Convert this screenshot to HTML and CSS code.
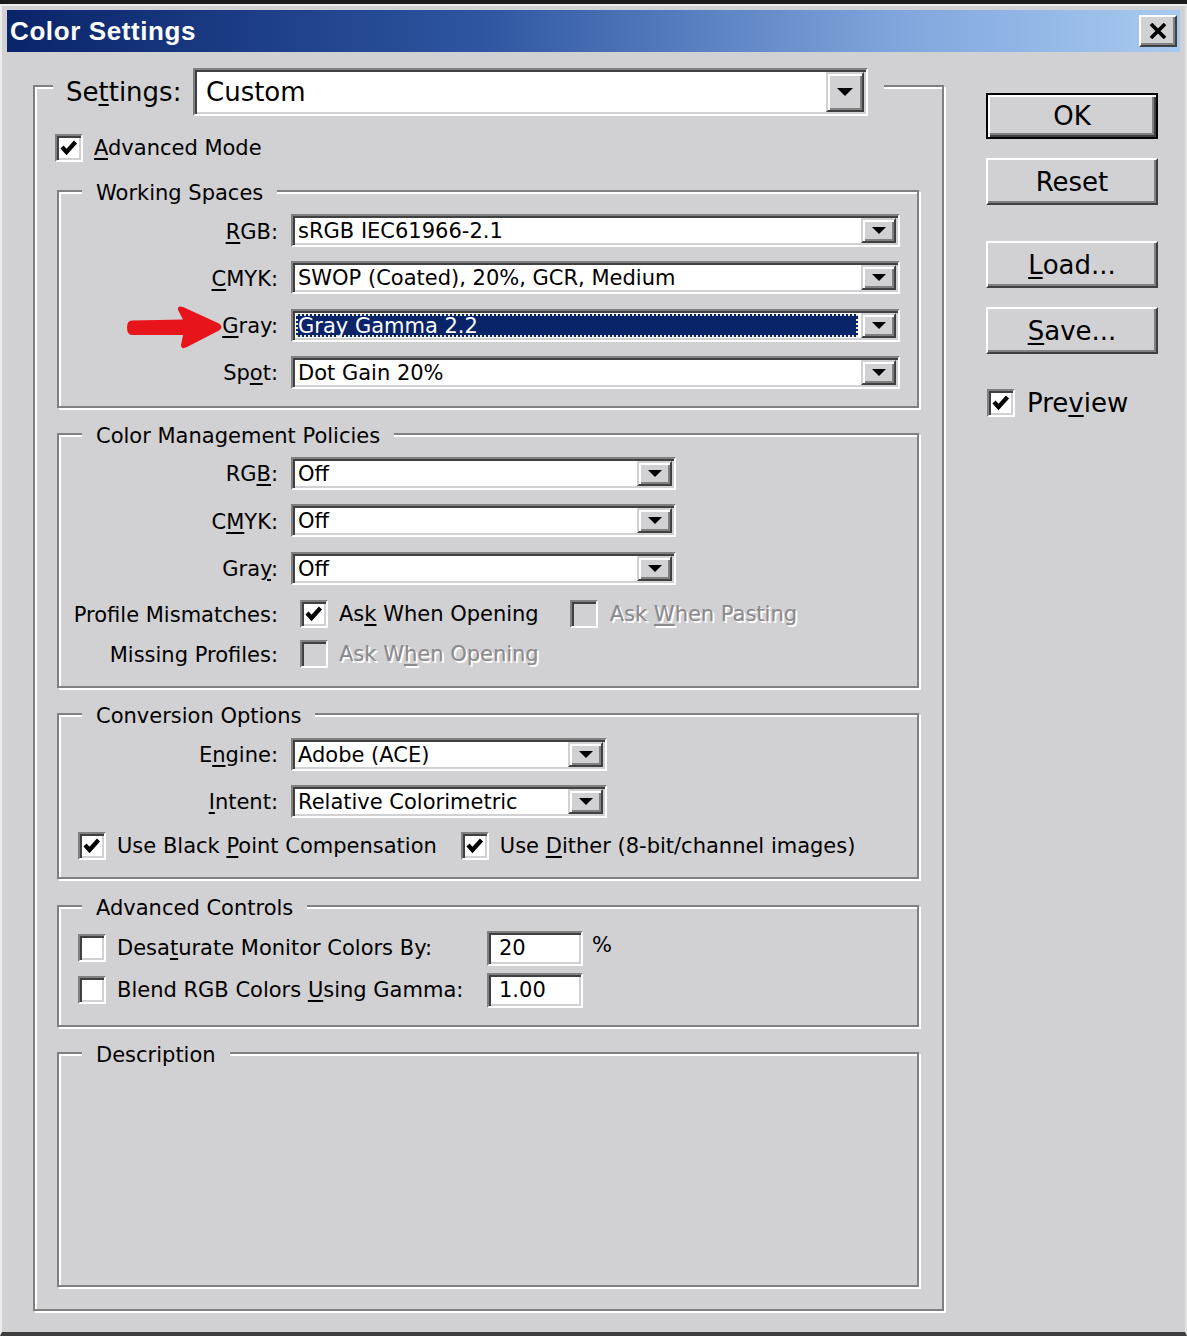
FILE: index.html
```html
<!DOCTYPE html>
<html lang="en">
<head>
<meta charset="utf-8">
<title>Color Settings</title>
<link rel="stylesheet" href="styles.css">
</head>
<body>
<div class="screen">
  <div class="window">
    <div class="titlebar">
      <span class="title-text">Color Settings</span>
      <button class="close-btn" aria-label="Close">
        <svg viewBox="0 0 18 16" width="18" height="16"><path d="M2 1 L16 15 M16 1 L2 15" stroke="#000" stroke-width="3.6" fill="none"/></svg>
      </button>
    </div>

    <div class="dialog-body">
      <div class="main-group">
        <div class="settings-head">
          <span class="settings-label">Se<u>t</u>tings:</span>
          <div class="combo combo-lg">
            <span class="combo-text">Custom</span>
            <span class="combo-btn"><i class="tri tri-lg"></i></span>
          </div>
        </div>

        <div class="check-line adv-mode">
          <span class="cb"><svg viewBox="0 0 20 20" width="20" height="20"><path d="M3 9 L7.5 14 L16.5 4" fill="none" stroke="#000" stroke-width="4.2"/></svg></span>
          <span class="cb-text"><u>A</u>dvanced Mode</span>
        </div>

        <section class="group ws">
          <div class="group-title">Working Spaces</div>
          <svg class="arrow" viewBox="0 0 98 46" width="98" height="46"><path d="M6 16.5 L57 15.5 L52 6 Q51 1 57 3 L93 19.5 Q98 23 93 26.5 L61 43 Q55 46 55 41 L57 31 L6 31 Q1 31 1 23.5 Q1 16.5 6 16.5 Z" fill="#e8141b"/></svg>
          <div class="rows ws-rows">
            <div class="form-row"><span class="lbl"><u>R</u>GB:</span>
              <div class="combo combo-ws"><span class="combo-text">sRGB IEC61966-2.1</span><span class="combo-btn"><i class="tri"></i></span></div></div>
            <div class="form-row"><span class="lbl"><u>C</u>MYK:</span>
              <div class="combo combo-ws"><span class="combo-text">SWOP (Coated), 20%, GCR, Medium</span><span class="combo-btn"><i class="tri"></i></span></div></div>
            <div class="form-row"><span class="lbl"><u>G</u>ray:</span>
              <div class="combo combo-ws"><span class="combo-text sel">Gray Gamma 2.2</span><span class="combo-btn"><i class="tri"></i></span></div></div>
            <div class="form-row"><span class="lbl">Sp<u>o</u>t:</span>
              <div class="combo combo-ws"><span class="combo-text">Dot Gain 20%</span><span class="combo-btn"><i class="tri"></i></span></div></div>
          </div>
        </section>

        <section class="group cmp">
          <div class="group-title">Color Management Policies</div>
          <div class="rows cmp-rows">
            <div class="form-row"><span class="lbl">RG<u>B</u>:</span>
              <div class="combo combo-cmp"><span class="combo-text">Off</span><span class="combo-btn"><i class="tri"></i></span></div></div>
            <div class="form-row"><span class="lbl">C<u>M</u>YK:</span>
              <div class="combo combo-cmp"><span class="combo-text">Off</span><span class="combo-btn"><i class="tri"></i></span></div></div>
            <div class="form-row"><span class="lbl">Gra<u>y</u>:</span>
              <div class="combo combo-cmp"><span class="combo-text">Off</span><span class="combo-btn"><i class="tri"></i></span></div></div>
          </div>
          <div class="check-row pm-row">
            <span class="lbl">Profile Mismatches:</span>
            <span class="cb cb-first"><svg viewBox="0 0 20 20" width="20" height="20"><path d="M3 9 L7.5 14 L16.5 4" fill="none" stroke="#000" stroke-width="4.2"/></svg></span>
            <span class="cb-text">As<u>k</u> When Opening</span>
            <span class="cb disabled cb-second"></span>
            <span class="cb-text disabled-text">Ask <u>W</u>hen Pasting</span>
          </div>
          <div class="check-row mp-row">
            <span class="lbl">Missing Profiles:</span>
            <span class="cb disabled cb-first"></span>
            <span class="cb-text disabled-text">Ask W<u>h</u>en Opening</span>
          </div>
        </section>

        <section class="group conv">
          <div class="group-title">Conversion Options</div>
          <div class="rows conv-rows">
            <div class="form-row"><span class="lbl">E<u>n</u>gine:</span>
              <div class="combo combo-conv"><span class="combo-text">Adobe (ACE)</span><span class="combo-btn"><i class="tri"></i></span></div></div>
            <div class="form-row"><span class="lbl"><u>I</u>ntent:</span>
              <div class="combo combo-conv"><span class="combo-text">Relative Colorimetric</span><span class="combo-btn"><i class="tri"></i></span></div></div>
          </div>
          <div class="check-line conv-checks">
            <span class="cb"><svg viewBox="0 0 20 20" width="20" height="20"><path d="M3 9 L7.5 14 L16.5 4" fill="none" stroke="#000" stroke-width="4.2"/></svg></span>
            <span class="cb-text">Use Black <u>P</u>oint Compensation</span>
            <span class="cb cb-dither"><svg viewBox="0 0 20 20" width="20" height="20"><path d="M3 9 L7.5 14 L16.5 4" fill="none" stroke="#000" stroke-width="4.2"/></svg></span>
            <span class="cb-text">Use <u>D</u>ither (8-bit/channel images)</span>
          </div>
        </section>

        <section class="group adv">
          <div class="group-title">Advanced Controls</div>
          <div class="adv-row adv-row1">
            <span class="cb"></span>
            <span class="cb-text adv-label">Desa<u>t</u>urate Monitor Colors By:</span>
            <span class="field">20</span>
            <span class="unit">%</span>
          </div>
          <div class="adv-row adv-row2">
            <span class="cb"></span>
            <span class="cb-text adv-label">Blend RGB Colors <u>U</u>sing Gamma:</span>
            <span class="field">1.00</span>
          </div>
        </section>

        <section class="group desc">
          <div class="group-title">Description</div>
        </section>
      </div>

      <div class="side">
        <button class="btn btn-default">OK</button>
        <button class="btn btn-reset">Reset</button>
        <button class="btn btn-load"><u>L</u>oad...</button>
        <button class="btn btn-save"><u>S</u>ave...</button>
        <div class="preview">
          <span class="cb"><svg viewBox="0 0 20 20" width="20" height="20"><path d="M3 9 L7.5 14 L16.5 4" fill="none" stroke="#000" stroke-width="4.2"/></svg></span>
          <span class="preview-text">Pre<u>v</u>iew</span>
        </div>
      </div>
    </div>
  </div>
</div>
</body>
</html>
```

FILE: styles.css
```css
* { box-sizing: border-box; }
html, body { margin: 0; padding: 0; }
body {
  background: #1b1b1b;
  font-family: "DejaVu Sans", "Noto Sans", sans-serif;
  font-size: 21px;
  color: #000;
}
u {
  text-decoration-thickness: 2px;
  text-underline-offset: 3px;
}

.screen {
  width: 1187px;
  height: 1336px;
  padding-top: 4px;
  overflow: hidden;
}
.window {
  height: 1332px;
  background: #d1d0d2;
  border-top: 2px solid #ececec;
  border-left: 2px solid #ececec;
  border-right: 2px solid #e2e2e2;
  border-bottom: 4px solid #3c3c3c;
  padding: 4px 5px 0 5px;
}

/* title bar */
.titlebar {
  height: 42px;
  background: linear-gradient(to right, #0a246a 0%, #2d55a0 40%, #7ea4dc 75%, #a8caf0 100%);
  display: flex;
  align-items: center;
  justify-content: space-between;
  padding: 0 3px;
}
.title-text {
  font-family: "Liberation Sans", Arial, sans-serif;
  font-weight: bold;
  font-size: 26px;
  letter-spacing: 0.6px;
  color: #fff;
}
.close-btn {
  width: 38px;
  height: 32px;
  padding: 0;
  background: #d1d0d2;
  border: 2px solid;
  border-color: #fff #404040 #404040 #fff;
  box-shadow: inset -2px -2px 0 #808080;
  display: flex;
  align-items: center;
  justify-content: center;
}

/* body */
.dialog-body {
  display: flex;
  margin-top: 33px;
  padding-left: 26px;
}

/* etched groups */
.main-group, .group {
  border: 2px solid #808080;
  box-shadow: inset 2px 2px 0 #fff, 2px 2px 0 #fff;
}
.main-group {
  width: 911px;
  padding-bottom: 22px;
}
.group {
  position: relative;
  width: 862px;
  margin-left: 22px;
}
.group-title {
  width: fit-content;
  margin: -11px 0 0 23px;
  padding: 0 14px;
  line-height: 24px;
  background: #d1d0d2;
  white-space: nowrap;
}

.settings-head {
  display: flex;
  align-items: center;
  width: fit-content;
  margin: -19px 0 0 18px;
  padding: 0 16px 0 13px;
  height: 48px;
  background: #d1d0d2;
}
.settings-label {
  font-size: 26px;
  width: 115px;
  margin-right: 12px;
  white-space: nowrap;
}

/* combo boxes */
.combo {
  display: flex;
  height: 33px;
  background: #fff;
  border: 2px solid;
  border-color: #808080 #fff #fff #808080;
  box-shadow: inset 2px 2px 0 #404040, inset -2px -2px 0 #d1d0d2;
  padding: 2px;
}
.combo-text {
  flex: 1;
  padding-left: 3px;
  padding-top: 1px;
  line-height: 25px;
  white-space: nowrap;
  overflow: hidden;
}
.combo-text.sel {
  background: #0a246a;
  color: #fff;
  outline: 2px dotted #ecebd0;
  outline-offset: -2px;
  margin: 1px 3px 1px 1px;
  line-height: 22px;
  padding-left: 2px;
}
.combo-btn {
  flex: none;
  width: 35px;
  background: #d1d0d2;
  border: 2px solid;
  border-color: #d1d0d2 #404040 #404040 #d1d0d2;
  box-shadow: inset 2px 2px 0 #fff, inset -2px -2px 0 #808080;
  display: flex;
  align-items: center;
  justify-content: center;
}
.tri {
  width: 0;
  height: 0;
  border-left: 7px solid transparent;
  border-right: 7px solid transparent;
  border-top: 7px solid #000;
}
.combo-lg {
  width: 675px;
  height: 48px;
}
.combo-lg .combo-text {
  font-size: 26px;
  line-height: 40px;
  padding-top: 0;
  padding-left: 9px;
}
.combo-lg .combo-btn { width: 38px; }
.tri-lg {
  border-left-width: 8px;
  border-right-width: 8px;
  border-top-width: 8px;
}
.combo-ws { width: 609px; }
.combo-cmp { width: 385px; }
.combo-conv { width: 316px; }

/* rows */
.rows {
  display: flex;
  flex-direction: column;
}
.form-row {
  display: flex;
  align-items: center;
  height: 33px;
}
.lbl {
  flex: none;
  width: 219px;
  margin-right: 13px;
  padding-top: 2px;
  text-align: right;
  white-space: nowrap;
}
.ws-rows {
  margin-top: 9px;
  gap: 14.3px;
  padding-bottom: 17px;
}
.cmp-rows {
  margin-top: 9px;
  gap: 14.5px;
}
.conv-rows {
  margin-top: 10px;
  gap: 14px;
}

/* checkboxes */
.cb {
  flex: none;
  width: 28px;
  height: 28px;
  background: #fff;
  border: 2px solid;
  border-color: #808080 #fff #fff #808080;
  box-shadow: inset 2px 2px 0 #404040, inset -2px -2px 0 #d1d0d2;
  display: flex;
  align-items: center;
  justify-content: center;
}
.cb.disabled { background: #d1d0d2; }
.cb-text {
  margin-left: 11px;
  white-space: nowrap;
}
.disabled-text {
  color: #8a898b;
  text-shadow: 2px 2px 0 #fff;
}
.check-line {
  display: flex;
  align-items: center;
  height: 29px;
}
.adv-mode {
  margin: 17px 0 0 20px;
}
.ws { margin-top: 28px; }
.cmp { margin-top: 25px; padding-bottom: 17px; }
.conv { margin-top: 25px; padding-bottom: 16px; }
.adv { margin-top: 26px; padding-bottom: 17px; }
.desc { margin-top: 25px; height: 235px; }

.check-row {
  display: flex;
  align-items: center;
  height: 29px;
}
.pm-row { margin-top: 15px; }
.mp-row { margin-top: 11px; }
.cb-first { margin-left: 9px; }
.cb-second { margin-left: 31px; }
.cb-second + .cb-text { margin-left: 12px; }

.conv-checks {
  margin: 14px 0 0 19px;
}
.cb-dither { margin-left: 24px; }

.adv-row {
  display: flex;
  align-items: center;
  height: 35px;
  padding-left: 19px;
}
.adv-row1 { margin-top: 11px; }
.adv-row2 { margin-top: 7px; }
.adv-label { width: 370px; }
.field {
  width: 96px;
  height: 35px;
  background: #fff;
  border: 2px solid;
  border-color: #808080 #fff #fff #808080;
  box-shadow: inset 2px 2px 0 #404040, inset -2px -2px 0 #d1d0d2;
  padding-left: 10px;
  line-height: 31px;
}
.unit {
  margin-left: 9px;
  margin-top: -6px;
}

.arrow {
  position: absolute;
  left: 67px;
  top: 112px;
}

/* right column */
.side {
  flex: none;
  width: 172px;
  margin-left: 42px;
  padding-top: 8px;
  display: flex;
  flex-direction: column;
}
.btn {
  width: 172px;
  height: 47px;
  padding: 0;
  font-family: "DejaVu Sans", sans-serif;
  font-size: 26px;
  color: #000;
  background: #d1d0d2;
  border: 2px solid;
  border-color: #fff #404040 #404040 #fff;
  box-shadow: inset -2px -2px 0 #808080;
  display: flex;
  align-items: center;
  justify-content: center;
}
.btn-default {
  height: 46px;
  border: 2px solid #000;
  box-shadow: inset 2px 2px 0 #fff, inset -2px -2px 0 #404040, inset -4px -4px 0 #808080;
}
.btn-reset { margin-top: 19px; }
.btn-load { margin-top: 36px; }
.btn-save { margin-top: 19px; }
.preview {
  display: flex;
  align-items: center;
  margin-top: 34px;
  padding-left: 1px;
}
.preview-text {
  font-size: 26px;
  margin-left: 12px;
}
```
